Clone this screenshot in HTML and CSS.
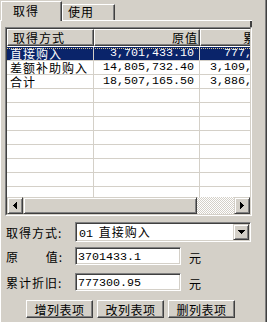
FILE: index.html
```html
<!DOCTYPE html>
<html lang="zh-CN">
  <head>
    <meta charset="UTF-8" />
    <link rel="stylesheet" href="styles.css">
    <title>取得</title>
  </head>
  <body>
    <div class="screen">
      <div class="tabctl">
        <div class="tabs">
          <div class="tab active">取得</div>
          <div class="tab">使用</div>
        </div>
        <div class="page">
          <div class="page-top"><span class="corner"></span></div>

          <!-- list grid -->
          <div class="grid">
            <div class="grid-inner">
              <div class="grid-view">
                <div class="grid-head">
                  <div class="hcell c1">取得方式</div>
                  <div class="hcell c2 right">原值</div>
                  <div class="hcell c3 right">累计折旧</div>
                </div>
                <div class="grid-body">
                  <div class="row sel">
                    <div class="cell c1">直接购入</div>
                    <div class="cell c2 num">3,701,433.10</div>
                    <div class="cell c3 num">777,300.95</div>
                  </div>
                  <div class="row">
                    <div class="cell c1">差额补助购入</div>
                    <div class="cell c2 num">14,805,732.40</div>
                    <div class="cell c3 num">3,109,203.80</div>
                  </div>
                  <div class="row">
                    <div class="cell c1">合计</div>
                    <div class="cell c2 num">18,507,165.50</div>
                    <div class="cell c3 num">3,886,504.75</div>
                  </div>
                  <div class="row"><div class="cell c1"></div><div class="cell c2"></div><div class="cell c3"></div></div>
                  <div class="row"><div class="cell c1"></div><div class="cell c2"></div><div class="cell c3"></div></div>
                  <div class="row"><div class="cell c1"></div><div class="cell c2"></div><div class="cell c3"></div></div>
                  <div class="row"><div class="cell c1"></div><div class="cell c2"></div><div class="cell c3"></div></div>
                  <div class="row"><div class="cell c1"></div><div class="cell c2"></div><div class="cell c3"></div></div>
                  <div class="row"><div class="cell c1"></div><div class="cell c2"></div><div class="cell c3"></div></div>
                  <div class="row"><div class="cell c1"></div><div class="cell c2"></div><div class="cell c3"></div></div>
                  <div class="row"><div class="cell c1"></div><div class="cell c2"></div><div class="cell c3"></div></div>
                </div>
              </div>
              <div class="hscroll">
                <div class="sbtn">
                  <svg width="4" height="7" viewBox="0 0 4 7" shape-rendering="crispEdges"><path d="M3 0h1v7H3z M2 1h1v5H2z M1 2h1v3H1z M0 3h1v1H0z" fill="#000"/></svg>
                </div>
                <div class="thumb"></div>
                <div class="track"></div>
                <div class="sbtn">
                  <svg width="4" height="7" viewBox="0 0 4 7" shape-rendering="crispEdges"><path d="M0 0h1v7H0z M1 1h1v5H1z M2 2h1v3H2z M3 3h1v1H3z" fill="#000"/></svg>
                </div>
              </div>
            </div>
          </div>

          <!-- edit fields -->
          <div class="form">
            <div class="field combo-row">
              <div class="label"><span class="label-text">取得方式:</span></div>
              <div class="combo">
                <span class="combo-text"><span class="num">01</span> 直接购入</span>
                <div class="drop">
                  <svg width="7" height="4" viewBox="0 0 7 4" shape-rendering="crispEdges"><path d="M0 0h7v1H0z M1 1h5v1H1z M2 2h3v1H2z M3 3h1v1H3z" fill="#000"/></svg>
                </div>
              </div>
            </div>
            <div class="field edit-row first">
              <div class="label"><span class="label-text"><span>原</span><span>值:</span></span></div>
              <div class="edit num">3701433.1</div>
              <span class="unit">元</span>
            </div>
            <div class="field edit-row">
              <div class="label"><span class="label-text">累计折旧:</span></div>
              <div class="edit num">777300.95</div>
              <span class="unit">元</span>
            </div>
            <div class="buttons">
              <button>增列表项</button>
              <button>改列表项</button>
              <button>删列表项</button>
            </div>
          </div>
        </div>
      </div>
      <div class="edge"></div>
    </div>
  </body>
</html>
```

FILE: styles.css
```css
body {
  margin: 0;
  background-color: #d4d0c8;
  color: #000;
  font-family: "Noto Sans CJK SC", sans-serif;
  font-size: 12px;
  line-height: 13px;
  overflow: hidden;
}

.screen {
  display: flex;
  width: 267px;
  height: 322px;
  overflow: hidden;
}

.tabctl {
  width: 252px;
  flex: none;
}

.edge {
  margin-left: auto;
  width: 1px;
  border-left: 1px solid #808080;
  background-color: #404040;
}

/* tabs */
.tabs {
  display: flex;
  align-items: flex-end;
  height: 20px;
  padding-left: 1px;
}

.tab {
  box-sizing: border-box;
  width: 53px;
  height: 16px;
  border: 1px solid;
  border-color: #fff #404040 transparent #fff;
  border-bottom: none;
  box-shadow: inset -1px 0 #808080;
  padding-left: 5px;
  line-height: 14px;
  letter-spacing: 1px;
}

.tab.active {
  width: 61px;
  height: 20px;
  margin-bottom: -1px;
  padding-left: 11px;
  line-height: 17px;
  background-color: #d4d0c8;
  position: relative;
  z-index: 1;
}

.page {
  border-top: 1px solid #fff;
  border-left: 1px solid #fff;
  height: 301px;
}

.page-top {
  height: 6px;
  display: flex;
  justify-content: flex-end;
}

.corner {
  width: 2px;
  background-color: #404040;
}

/* grid */
.grid {
  box-sizing: border-box;
  margin-left: 4px;
  width: 247px;
  height: 189px;
  border: 1px solid;
  border-color: #808080 #fff #fff #808080;
}

.grid-inner {
  height: 100%;
  border: 1px solid;
  border-color: #404040 #d4d0c8 #d4d0c8 #404040;
  box-sizing: border-box;
  display: flex;
  flex-direction: column;
}

.grid-view {
  height: 168px;
  overflow: hidden;
  background-color: #fff;
}

.grid-head {
  display: flex;
  height: 17px;
  background-color: #d4d0c8;
}

.hcell {
  flex: none;
  box-sizing: border-box;
  height: 17px;
  border: 1px solid;
  border-color: #fff #404040 #404040 #fff;
  box-shadow: inset -1px -1px #808080;
  line-height: 15px;
  letter-spacing: 1px;
  white-space: nowrap;
  overflow: hidden;
}

.hcell.c1 {
  padding-left: 5px;
}

.hcell.c2 {
  padding-right: 1px;
}

.hcell.c3 {
  padding-right: 4px;
}

.right {
  text-align: right;
}

.c1 {
  width: 87px;
}

.c2 {
  width: 106px;
}

.c3 {
  width: 100px;
}

.grid-body {
  padding-top: 1px;
}

.row {
  display: flex;
  height: 14px;
}

.cell {
  flex: none;
  box-sizing: border-box;
  height: 14px;
  border-right: 1px solid #d4d0c8;
  border-bottom: 1px solid #d4d0c8;
  line-height: 13px;
  white-space: nowrap;
  overflow: hidden;
}

.cell.c1 {
  padding-left: 3px;
  letter-spacing: 1px;
}

.cell.c2 {
  text-align: right;
  padding-right: 5px;
}

.cell.c3 {
  text-align: right;
  padding-right: 5px;
}

.row.sel {
  color: #fff;
  background: repeating-linear-gradient(90deg, #e8d08a 0 1px, #0a246a 1px 2px) 0 1px / 100% 1px no-repeat, #0a246a;
}

.num {
  font-family: "Liberation Mono", monospace;
  font-size: 11.67px;
  letter-spacing: 0;
}

/* horizontal scrollbar */
.hscroll {
  display: flex;
  height: 17px;
}

.sbtn,
.drop {
  box-sizing: border-box;
  width: 16px;
  flex: none;
  display: flex;
  align-items: center;
  justify-content: center;
  border: 1px solid;
  border-color: #d4d0c8 #404040 #404040 #d4d0c8;
  box-shadow: inset 1px 1px #fff, inset -1px -1px #808080;
  background-color: #d4d0c8;
}

.thumb {
  box-sizing: border-box;
  width: 174px;
  flex: none;
  border: 1px solid;
  border-color: #d4d0c8 #404040 #404040 #d4d0c8;
  box-shadow: inset 1px 1px #fff, inset -1px -1px #808080;
}

.track {
  flex: 1;
  background: repeating-conic-gradient(#fff 0 25%, #d4d0c8 0 50%) 0 0 / 2px 2px;
}

/* form */
.form {
  padding-left: 5px;
}

.field {
  display: flex;
  align-items: center;
}

.combo-row {
  margin-top: 6px;
  height: 20px;
}

.edit-row {
  margin-top: 8px;
  height: 18px;
}

.edit-row.first {
  margin-top: 5px;
}

.label {
  width: 69px;
  flex: none;
}

.label-text {
  display: flex;
  justify-content: space-between;
  width: 57px;
  letter-spacing: 1px;
}

.combo {
  box-sizing: border-box;
  width: 176px;
  height: 20px;
  display: flex;
  border: 1px solid;
  border-color: #808080 #fff #fff #808080;
  box-shadow: inset 1px 1px #404040, inset -1px -1px #d4d0c8;
  background-color: #fff;
  padding: 1px;
}

.combo-text {
  flex: 1;
  padding-left: 2px;
  line-height: 16px;
  letter-spacing: 1px;
}

.combo-text .num {
  margin-right: 2px;
}

.drop {
  height: 16px;
}

.edit {
  box-sizing: border-box;
  width: 106px;
  height: 18px;
  border: 1px solid;
  border-color: #808080 #fff #fff #808080;
  box-shadow: inset 1px 1px #404040, inset -1px -1px #d4d0c8;
  background-color: #fff;
  padding: 1px 1px 0 2px;
  line-height: 16px;
}

.unit {
  margin-left: 8px;
  margin-top: 3px;
}

.buttons {
  display: flex;
  gap: 4px;
  margin-top: 9px;
  padding-left: 20px;
}

button {
  box-sizing: border-box;
  width: 67px;
  height: 18px;
  padding: 0;
  border: 1px solid;
  border-color: #fff #404040 #404040 #fff;
  box-shadow: inset -1px -1px #808080;
  background-color: #d4d0c8;
  color: #000;
  font-family: "Noto Sans CJK SC", sans-serif;
  font-size: 12px;
  line-height: 15px;
  letter-spacing: 0.5px;
}
```
